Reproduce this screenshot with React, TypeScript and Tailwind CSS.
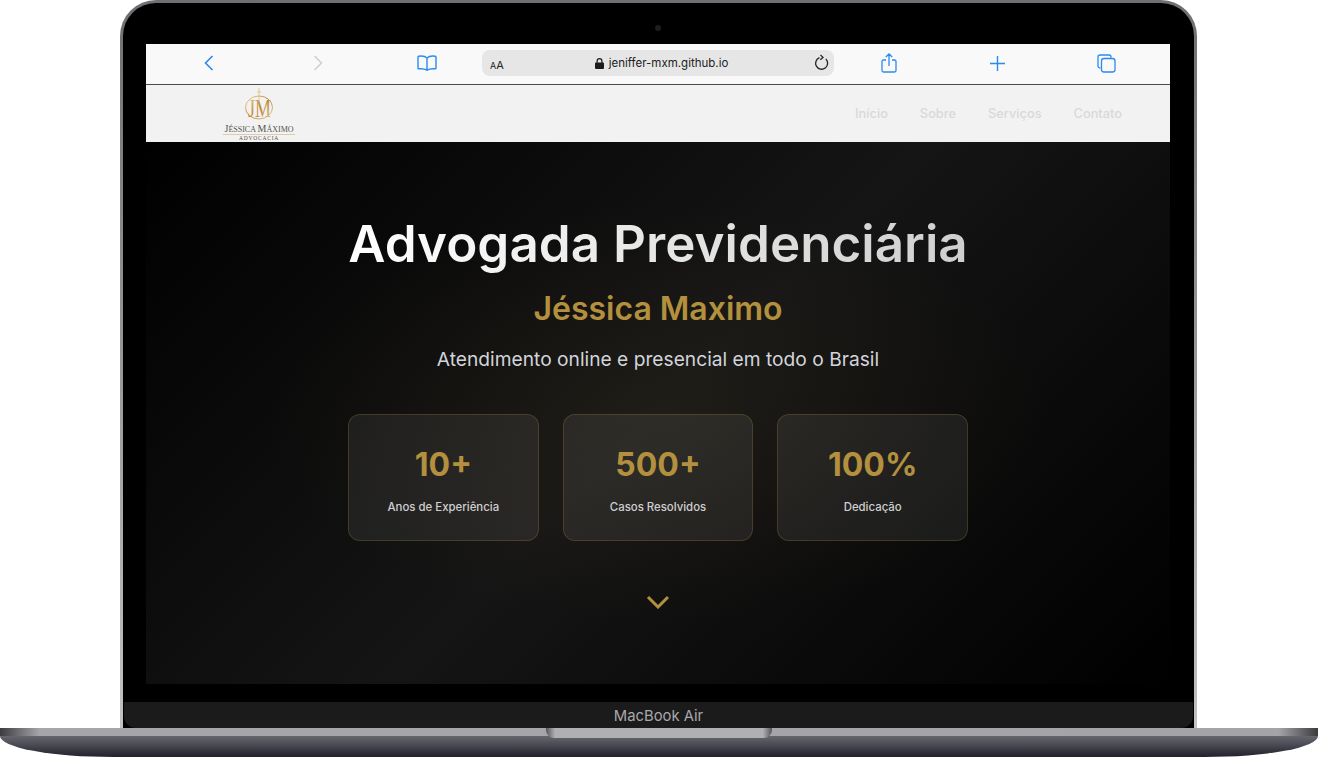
import { ReactNode } from 'react';

const stats = [
  { value: '10+', label: 'Anos de Experiência' },
  { value: '500+', label: 'Casos Resolvidos' },
  { value: '100%', label: 'Dedicação' },
];

const navLinks = ['Início', 'Sobre', 'Serviços', 'Contato'];

const ToolCell = ({ children }: { children: ReactNode }) => (
  <div className="flex w-[109px] items-center justify-center">{children}</div>
);

const Logo = () => (
  <svg width="76" height="56" viewBox="0 0 76 56" className="block">
    <defs>
      <linearGradient id="gold" x1="0" y1="0" x2="1" y2="1">
        <stop offset="0" stopColor="#f0d9a8" />
        <stop offset="0.5" stopColor="#b9832f" />
        <stop offset="1" stopColor="#e8cfa0" />
      </linearGradient>
    </defs>
    <path d="M38 2v12M36 6h4" stroke="#e3c48e" strokeWidth="0.9" fill="none" />
    <ellipse cx="38" cy="21.500" rx="13.500" ry="11.500" fill="none" stroke="url(#gold)" strokeWidth="1" />
    <text
      x="27"
      y="31"
      fontSize="26"
      textLength="23"
      lengthAdjust="spacingAndGlyphs"
      fill="url(#gold)"
      className="font-['Liberation_Serif']"
    >
      JM
    </text>
    <text x="38" y="46" textAnchor="middle" fontSize="8" fill="#55524e" className="font-['Liberation_Serif']">
      <tspan fontSize="10">J</tspan>ÉSSICA <tspan fontSize="10">M</tspan>ÁXIMO
    </text>
    <path d="M2 48.500h72" stroke="#cdb27c" strokeWidth="0.6" />
    <text x="38" y="54" textAnchor="middle" fontSize="5.500" letterSpacing="0.8" fill="#55524e" className="font-['Liberation_Serif']">
      ADVOCACIA
    </text>
  </svg>
);

const BrowserBar = () => (
  <div className="flex h-[41px] items-center border-b-[1.5px] border-[#4a4a4a] bg-[#f9f9f9] px-[8px] pb-[2px]">
    <ToolCell>
      <svg width="10" height="16" viewBox="0 0 10 16" fill="none" stroke="#1f84ef" strokeWidth="1.5">
        <path d="M8.500 1 1.500 8l7 7" />
      </svg>
    </ToolCell>
    <ToolCell>
      <svg width="10" height="16" viewBox="0 0 10 16" fill="none" stroke="#cfcfcf" strokeWidth="1.5">
        <path d="m1.500 1 7 7-7 7" />
      </svg>
    </ToolCell>
    <ToolCell>
      <svg width="20" height="16" viewBox="0 0 20 16" fill="none" stroke="#2a8af0" strokeWidth="1.4">
        <path d="M10 3C8.500 1.400 5 .8 1.800 1.200 1.200 1.300 1 1.600 1 2.200V13c0 .6.3.8.9.8 3-.2 6 0 8.100 1.400 2.100-1.400 5.100-1.600 8.100-1.400.6 0 .9-.2.9-.8V2.200c0-.6-.2-.9-.8-1C15 .8 11.500 1.400 10 3Zm0 0v12" />
      </svg>
    </ToolCell>
    <div className="relative ml-[1px] flex h-[26px] w-[352px] items-center justify-center rounded-[8px] bg-[#e6e6e6]">
      <span className="absolute left-[8px] top-[8px] font-['Inter',sans-serif] text-[11px] leading-[14px] text-[#222]">
        <span className="text-[9px]">A</span>A
      </span>
      <svg width="9" height="11" viewBox="0 0 9 11" className="ml-[7px] mr-[5px]" fill="#1c1c1c">
        <path d="M1.500 4.500V3a3 3 0 0 1 6 0v1.500H8a1 1 0 0 1 1 1V10a1 1 0 0 1-1 1H1a1 1 0 0 1-1-1V5.500a1 1 0 0 1 1-1Zm1.200 0h3.600V3a1.800 1.800 0 0 0-3.600 0Z" />
      </svg>
      <span className="pt-[1px] font-['Inter',sans-serif] text-[11.500px] text-[#222]">jeniffer-mxm.github.io</span>
      <svg
        width="15"
        height="17"
        viewBox="0 0 15 17"
        fill="none"
        stroke="#222"
        strokeWidth="1.300"
        className="absolute right-[5px] top-[4px]"
      >
        <path d="M5.500 3.600a6 6 0 1 0 6.300 1.300M6.500 1l2.500 2.400-2.700 2.300" />
      </svg>
    </div>
    <ToolCell>
      <svg width="16" height="20" viewBox="0 0 16 20" fill="none" stroke="#2a8af0" strokeWidth="1.300">
        <path d="M5 7H2.500C1.500 7 1 7.500 1 8.500v9c0 1 .5 1.500 1.500 1.500h11c1 0 1.500-.5 1.500-1.500v-9c0-1-.5-1.500-1.500-1.500H11M8 13V1M4.800 4 8 1l3.200 3" />
      </svg>
    </ToolCell>
    <ToolCell>
      <svg width="15" height="15" viewBox="0 0 15 15" fill="none" stroke="#2a8af0" strokeWidth="1.400">
        <path d="M7.500 0v15M0 7.500h15" />
      </svg>
    </ToolCell>
    <ToolCell>
      <svg width="19" height="19" viewBox="0 0 19 19" fill="none" stroke="#2a8af0" strokeWidth="1.300">
        <path d="M3.500 14H3a2 2 0 0 1-2-2V3a2 2 0 0 1 2-2h9a2 2 0 0 1 2 2v.8" />
        <rect x="4.500" y="4.500" width="13.500" height="13.500" rx="2.500" />
      </svg>
    </ToolCell>
  </div>
);

const SiteNav = () => (
  <div className="flex h-[57px] items-center justify-between bg-[#f2f2f2] pl-[75px] pr-[48px]">
    <Logo />
    <div className="flex gap-[32px] font-['Inter',sans-serif] text-[12.800px] font-medium text-[#d9d9d9]">
      {navLinks.map((link) => (
        <span key={link}>{link}</span>
      ))}
    </div>
  </div>
);

const Hero = () => (
  <div className="flex h-[542px] flex-col items-center bg-[radial-gradient(ellipse_at_center,rgba(176,141,62,0.07)_0%,rgba(176,141,62,0)_55%),linear-gradient(135deg,#000_0%,#151515_50%,#000_100%)] pt-[70px] font-['Inter',sans-serif]">
    <h1 className="bg-gradient-to-r from-white to-[#cfcfcf] bg-clip-text text-[51.200px] font-semibold leading-[62px] text-transparent">
      Advogada Previdenciária
    </h1>
    <h2 className="mt-[15px] text-[32px] font-semibold leading-[40px] text-[#b3903e]">Jéssica Maximo</h2>
    <p className="mt-[16px] text-[19.200px] leading-[28px] text-[#d1d5db]">Atendimento online e presencial em todo o Brasil</p>
    <div className="mt-[41px] grid w-[620px] grid-cols-3 gap-[24px]">
      {stats.map((stat) => (
        <div
          key={stat.label}
          className="flex h-[127px] flex-col items-center rounded-[12px] border border-[#b08d3e]/25 bg-white/[0.07] pt-[26px]"
        >
          <span className="text-[32px] font-bold leading-[48px] text-[#b3903e]">{stat.value}</span>
          <span className="mt-[10px] text-[11.400px] font-medium leading-[16px] text-[#cfcfcf]">{stat.label}</span>
        </div>
      ))}
    </div>
    <svg width="24" height="14" viewBox="0 0 24 14" fill="none" stroke="#b3903e" strokeWidth="3" className="mt-[54px]">
      <path d="m2 2 10 10L22 2" />
    </svg>
  </div>
);

const App = () => (
  <div className="flex h-[757px] w-[1318px] flex-col items-center overflow-hidden bg-white">
    <div className="ml-[-1px] h-[728px] w-[1077px] rounded-t-[36px] bg-gradient-to-b from-[#6e6e73] to-[#c2c2c6] px-[3px] pt-[3px]">
      <div className="relative flex h-[725px] flex-col rounded-t-[33px] bg-black">
        <div className="absolute left-[532px] top-[22px] h-[6px] w-[6px] rounded-full bg-[#1d1d22]" />
        <div className="mx-[23px] mt-[41px] w-[1024px]">
          <BrowserBar />
          <SiteNav />
          <Hero />
        </div>
        <div className="mx-[1px] mt-[18px] flex h-[26px] items-center justify-center rounded-b-[12px] bg-[#1b1b1b] pt-[2px] font-['Inter',sans-serif] text-[14.800px] text-[#a9a9ac]">
          MacBook Air
        </div>
      </div>
    </div>
    <div className="h-[29px] w-full overflow-hidden">
      <div className="flex h-[8px] justify-center bg-[linear-gradient(to_right,#3c3c40_0%,#a6a6aa_3%,#a3a3a8_97%,#3c3c40_100%)]">
        <div className="h-[10px] w-[226px] rounded-b-[8px] bg-[linear-gradient(to_right,#55555a_0%,#b0b0b4_4%,#b0b0b4_96%,#55555a_100%)]" />
      </div>
      <div className="h-[21px] rounded-b-[130px_24px] bg-gradient-to-b from-[#66676e] via-[#44454e] to-[#20212a]" />
    </div>
  </div>
);

export default App;
